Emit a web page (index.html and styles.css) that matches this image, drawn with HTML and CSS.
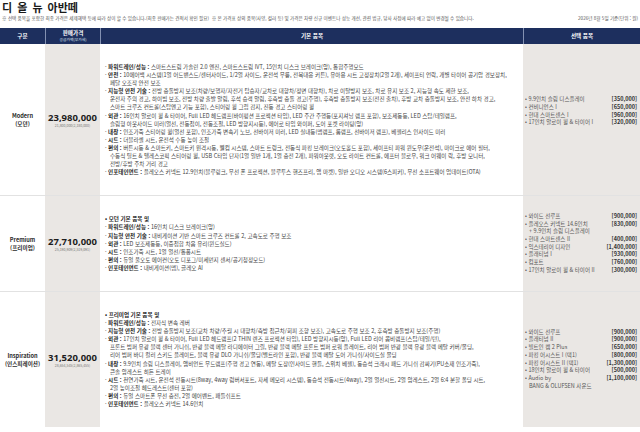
FILE: index.html
```html
<!DOCTYPE html>
<html lang="ko">
<head>
<meta charset="utf-8">
<title>디 올 뉴 아반떼</title>
<link rel="stylesheet" href="styles.css">
</head>
<body>
<div class="page">
  <h1 class="title">디 올 뉴 아반떼</h1>
  <div class="notes">
    <p>※ 선택 품목을 포함한 최종 가격은 세제혜택 등에 따라 상이 할 수 있습니다.(최종 판매가는 견적서 확인 필요) &nbsp;※ 본 가격표 상의 품목(사양, 컬러 등) 및 가격은 차량 신규 이벤트나 성능 개선, 관련 법규, 당사 사정에 따라 예고 없이 변경될 수 있습니다.</p>
    <p>2026년 8월 5일 기준(단위 : 원)</p>
  </div>
  <div class="table">
    <div class="thead">
      <div class="th">구분</div>
      <div class="th"><b>판매가격</b><span>공급가액(부가세)</span></div>
      <div class="th">기본 품목</div>
      <div class="th">선택 품목</div>
    </div>

    <div class="row">
      <div class="cell trim">Modern<br>(모던)</div>
      <div class="cell price"><b>23,980,000</b><span>21,800,000(2,180,000)</span></div>
      <div class="cell basic">
        <p class="li">· <b>파워트레인/성능 :</b> 스마트스트림 가솔린 2.0 엔진, 스마트스트림 IVT, 15인치 디스크 브레이크(앞), 통합주행모드</p>
        <p class="li">· <b>안전 :</b> 10에어백 시스템(1열 어드밴스드/센터사이드, 1/2열 사이드, 운전석 무릎, 전복대응 커튼), 유아용 시트 고정장치(2열 2개), 세이프티 언락, 개별 타이어 공기압 경보장치,<br>페달 오조작 안전 보조</p>
        <p class="li">· <b>지능형 안전 기술 :</b> 전방 충돌방지 보조(차량/보행자/자전거 탑승자/교차로 대향차/정면 대향차), 차로 이탈방지 보조, 차로 유지 보조 2, 지능형 속도 제한 보조,<br>운전자 주의 경고, 하이빔 보조, 전방 차량 출발 알림, 후석 승객 알림, 후측방 충돌 경고(주행), 후측방 충돌방지 보조(전진 출차), 후방 교차 충돌방지 보조, 안전 하차 경고,<br>스마트 크루즈 컨트롤(스탑앤고 기능 포함), 스티어링 휠 그립 감지, 진동 경고 스티어링 휠</p>
        <p class="li">· <b>외관 :</b> 16인치 알로이 휠 &amp; 타이어, Full LED 헤드램프(바이펑션 프로젝션 타입), LED 주간 주행등(포지셔닝 램프 포함), 보조제동등, LED 스탑/테일램프,<br>슬림형 아웃사이드 미러(열선, 전동접이, 전동조절, LED 방향지시등), 에어로 타입 와이퍼, 도어 포켓 라이팅(앞)</p>
        <p class="li">· <b>내장 :</b> 인조가죽 스티어링 휠(열선 포함), 인조가죽 변속기 노브, 선바이저 미러, LED 실내등(맵램프, 룸램프, 선바이저 램프), 베젤리스 인사이드 미러</p>
        <p class="li">· <b>시트 :</b> 더블라셀 시트, 운전석 수동 높이 조절</p>
        <p class="li">· <b>편의 :</b> 버튼시동 &amp; 스마트키, 스마트키 원격시동, 웰컴 시스템, 스마트 트렁크, 전동식 파킹 브레이크(오토홀드 포함), 세이프티 파워 윈도우(운전석), 마이크로 에어 필터,<br>수동식 틸트 &amp; 텔레스코픽 스티어링 휠, USB C타입 단자(1열 일반 1개, 1열 충전 2개), 파워아웃렛, 오토 라이트 컨트롤, 에프터 블로우, 워크 어웨이 락, 후방 모니터,<br>전방/후방 주차 거리 경고</p>
        <p class="li">· <b>인포테인먼트 :</b> 플레오스 커넥트 12.9인치(블루링크, 무선 폰 프로젝션, 블루투스 핸즈프리, 앱 마켓), 일반 오디오 시스템(6스피커), 무선 소프트웨어 업데이트(OTA)</p>
      </div>
      <div class="cell opts opts-up">
        <div class="opt"><span>• 9.9인치 슬림 디스플레이</span><b>[350,000]</b></div>
        <div class="opt"><span>• 컨비니언스 I</span><b>[650,000]</b></div>
        <div class="opt"><span>• 현대 스마트센스 I</span><b>[960,000]</b></div>
        <div class="opt"><span>• 17인치 알로이 휠 &amp; 타이어 I</span><b>[320,000]</b></div>
      </div>
    </div>

    <div class="row">
      <div class="cell trim">Premium<br>(프리미엄)</div>
      <div class="cell price"><b>27,710,000</b><span>25,190,909(2,519,091)</span></div>
      <div class="cell basic">
        <p class="li lead"><b>• 모던 기본 품목 및</b></p>
        <p class="li">· <b>파워트레인/성능 :</b> 16인치 디스크 브레이크(앞)</p>
        <p class="li">· <b>지능형 안전 기술 :</b> 내비게이션 기반 스마트 크루즈 컨트롤 2, 고속도로 주행 보조</p>
        <p class="li">· <b>외관 :</b> LED 보조제동등, 이중접합 차음 유리(윈드실드)</p>
        <p class="li">· <b>시트 :</b> 인조가죽 시트, 1열 열선/통풍시트</p>
        <p class="li">· <b>편의 :</b> 듀얼 풀오토 에어컨(오토 디포그/미세먼지 센서/공기청정모드)</p>
        <p class="li">· <b>인포테인먼트 :</b> 내비게이션(맵), 글레오 AI</p>
      </div>
      <div class="cell opts">
        <div class="opt"><span>• 와이드 선루프</span><b>[900,000]</b></div>
        <div class="opt"><span>• 플레오스 커넥트 14.6인치</span><b>[830,000]</b></div>
        <div class="opt sub"><span>+ 9.9인치 슬림 디스플레이</span></div>
        <div class="opt"><span>• 현대 스마트센스 II</span><b>[400,000]</b></div>
        <div class="opt"><span>• 익스테리어 디자인</span><b>[1,400,000]</b></div>
        <div class="opt"><span>• 플래티넘 I</span><b>[930,000]</b></div>
        <div class="opt"><span>• 컴포트</span><b>[760,000]</b></div>
        <div class="opt"><span>• 17인치 알로이 휠 &amp; 타이어 II</span><b>[300,000]</b></div>
      </div>
    </div>

    <div class="row">
      <div class="cell trim">Inspiration<br>(인스피레이션)</div>
      <div class="cell price"><b>31,520,000</b><span>28,654,545(2,865,455)</span></div>
      <div class="cell basic">
        <p class="li lead"><b>• 프리미엄 기본 품목 및</b></p>
        <p class="li">· <b>파워트레인/성능 :</b> 전자식 변속 레버</p>
        <p class="li">· <b>지능형 안전 기술 :</b> 전방 충돌방지 보조(교차 차량/추월 시 대향차/측방 접근차/회피 조향 보조), 고속도로 주행 보조 2, 후측방 충돌방지 보조(주행)</p>
        <p class="li">· <b>외관 :</b> 17인치 알로이 휠 &amp; 타이어, Full LED 헤드램프(2 THIN 렌즈 프로젝션 타입), LED 방향지시등(앞), Full LED 리어 콤비램프(스탑/테일/턴),<br>프론트 범퍼 유광 블랙 센터 가니쉬, 반광 블랙 메탈 라디에이터 그릴, 반광 블랙 메탈 프론트 범퍼 로워 플레이트, 리어 범퍼 반광 블랙 유광 블랙 메탈 커버/몰딩,<br>리어 범퍼 바디 컬러 스키드 플레이트, 블랙 유광 DLO 가니쉬/몰딩(벨트라인 포함), 반광 블랙 메탈 도어 가니쉬/사이드실 몰딩</p>
        <p class="li">· <b>내장 :</b> 9.9인치 슬림 디스플레이, 앰비언트 무드램프(주행 경고 연동), 메탈 도장(인사이드 핸들, 스위치 베젤), 동승석 크래시 패드 가니쉬 감싸기(PU소재 인조가죽),<br>콘솔 암레스트 히든 트레이</p>
        <p class="li">· <b>시트 :</b> 천연가죽 시트, 운전석 전동시트(8way, 4way 럼버서포트, 자세 메모리 시스템), 동승석 전동시트(4way), 2열 열선시트, 2열 암레스트, 2열 6:4 분할 폴딩 시트,<br>2열 높이조절 헤드레스트(센터 포함)</p>
        <p class="li">· <b>편의 :</b> 듀얼 스마트폰 무선 충전, 2열 에어벤트, 패들쉬프트</p>
        <p class="li">· <b>인포테인먼트 :</b> 플레오스 커넥트 14.6인치</p>
      </div>
      <div class="cell opts">
        <div class="opt"><span>• 와이드 선루프</span><b>[900,000]</b></div>
        <div class="opt"><span>• 플래티넘 II</span><b>[900,000]</b></div>
        <div class="opt"><span>• 빌트인 캠 2 Plus</span><b>[650,000]</b></div>
        <div class="opt"><span>• 파킹 어시스트 I (택1)</span><b>[800,000]</b></div>
        <div class="opt"><span>• 파킹 어시스트 II (택1)</span><b>[1,300,000]</b></div>
        <div class="opt"><span>• 18인치 알로이 휠 &amp; 타이어</span><b>[500,000]</b></div>
        <div class="opt"><span>• Audio by</span><b>[1,100,000]</b></div>
        <div class="opt sub"><span>BANG &amp; OLUFSEN 사운드</span></div>
      </div>
    </div>
  </div>
</div>
</body>
</html>
```

FILE: styles.css
```css
* { box-sizing: border-box; margin: 0; padding: 0; }
html, body { background: #fff; }
body {
  margin: 0;
  font-family: "Noto Sans CJK KR", "Noto Sans", sans-serif;
  color: #333;
}
.page { width: 640px; height: 432px; overflow: hidden; }

.title {
  font-size: 11px;
  font-weight: 700;
  line-height: 14px;
  padding-left: 2px;
  color: #1a1a1a;
  word-spacing: 2px;
}
.notes {
  display: flex;
  justify-content: space-between;
  padding: 0 2px;
  font-size: 4.6px;
  line-height: 8px;
  color: #555;
  margin-bottom: 6px;
  white-space: nowrap;
}

.thead, .row {
  display: grid;
  grid-template-columns: 45px 55px 1fr 117px;
}
.thead {
  height: 16px;
  background: #1d2f5e;
  color: #fff;
}
.th {
  display: flex;
  flex-direction: column;
  align-items: center;
  justify-content: center;
  font-size: 5.6px;
  font-weight: 700;
  line-height: 7px;
  border-left: 1px solid #8391b2;
}
.th:first-child { border-left: 0; }
.th b { font-weight: 700; }
.th span { font-size: 3.8px; font-weight: 400; line-height: 5px; color: #dfe4ef; }

.row { border-top: 1px solid #e2e2e2; }
.thead + .row { border-top: 0; }

.cell {
  display: flex;
  flex-direction: column;
  justify-content: center;
}
.price, .opts { background: #eae7e4; }

.trim {
  align-items: center;
  text-align: center;
  font-size: 5.6px;
  font-weight: 700;
  line-height: 8px;
  color: #2a2a2a;
}
.price { align-items: center; text-align: center; }
.price b {
  font-family: "Noto Sans", sans-serif;
  font-size: 9.5px;
  font-weight: 700;
  line-height: 11px;
  color: #1d1d1d;
}
.price span {
  font-size: 3.5px;
  line-height: 5px;
  color: #777;
}

.basic {
  padding: 19px 0 19px 5px;
  font-size: 5.55px;
  line-height: 8.1px;
  color: #444;
  white-space: nowrap;
}
.basic b { color: #222; font-weight: 700; }
.li { padding-left: 5px; text-indent: -5px; }
.li.lead { padding-left: 0; text-indent: 0; }

.opts {
  padding: 0 3px 0 2px;
  font-size: 5.5px;
  line-height: 7.7px;
  color: #555;
}
.opts-up { padding-bottom: 16px; }
.opt { display: flex; justify-content: space-between; white-space: nowrap; }
.opt b { font-weight: 700; color: #333; }
.opt.sub { padding-left: 4px; }
```
